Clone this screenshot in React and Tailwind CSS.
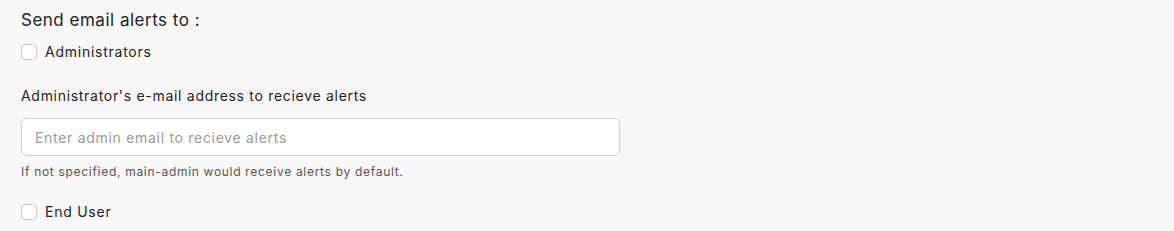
import React from 'react'

function Check({ label }){
  return (
    <label className="flex items-center gap-[8px] text-[14px] text-[#222] tracking-[0.75px]">
      <span className="w-[16px] h-[16px] rounded-[4px] border border-[#c8c8c8] bg-white" />
      {label}
    </label>
  )
}

export default function App(){
  return (
    <div className="w-[1174px] h-[231px] bg-[#f8f8f8] px-[21px] pt-[9px]" style={{ fontFamily: 'Inter, "Noto Sans", sans-serif' }}>
      <h3 className="text-[17px] text-[#222] leading-[23px] tracking-[0.5px]">Send email alerts to :</h3>
      <div className="mt-[9px]"><Check label="Administrators" /></div>
      <p className="mt-[24px] text-[14px] text-[#222] leading-[20px] tracking-[0.7px]">Administrator's e-mail address to recieve alerts</p>
      <input
        className="mt-[12px] w-[599px] h-[38px] rounded-[6px] border border-[#cfcfcf] bg-white px-[13px] text-[14px] tracking-[0.7px] outline-none placeholder:text-[#9a9a9a]"
        placeholder="Enter admin email to recieve alerts"
      />
      <p className="mt-[8px] text-[12px] text-[#555] leading-[16px] tracking-[0.7px]">If not specified, main-admin would receive alerts by default.</p>
      <div className="mt-[21px]"><Check label="End User" /></div>
    </div>
  )
}
